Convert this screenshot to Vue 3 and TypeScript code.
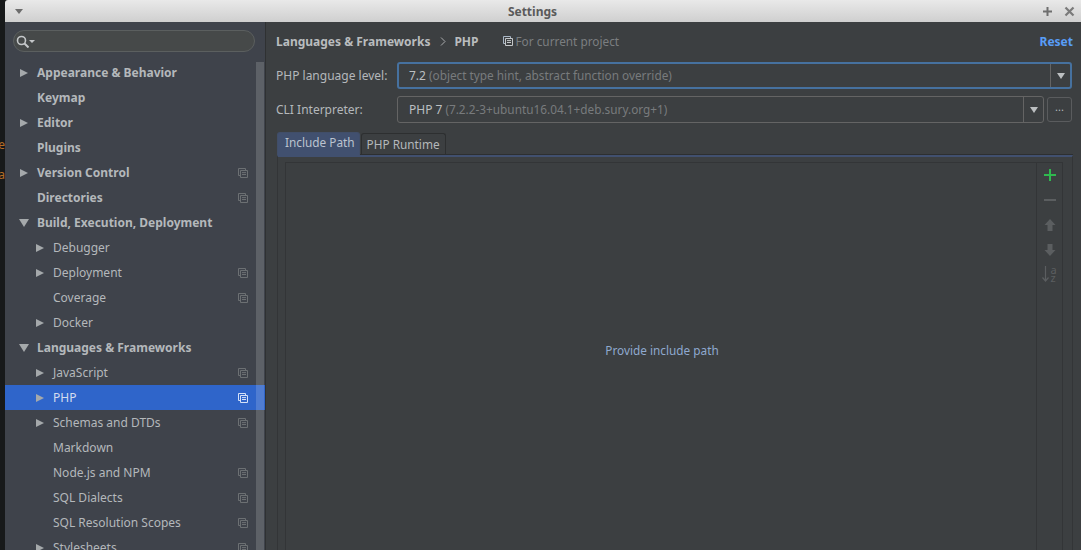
<script setup lang="ts">
interface TreeRow {
  label: string
  level: 0 | 1
  arrow?: 'right' | 'down'
  project?: boolean
  selected?: boolean
}

const rows: TreeRow[] = [
  { label: 'Appearance & Behavior', level: 0, arrow: 'right' },
  { label: 'Keymap', level: 0 },
  { label: 'Editor', level: 0, arrow: 'right' },
  { label: 'Plugins', level: 0 },
  { label: 'Version Control', level: 0, arrow: 'right', project: true },
  { label: 'Directories', level: 0, project: true },
  { label: 'Build, Execution, Deployment', level: 0, arrow: 'down' },
  { label: 'Debugger', level: 1, arrow: 'right' },
  { label: 'Deployment', level: 1, arrow: 'right', project: true },
  { label: 'Coverage', level: 1, project: true },
  { label: 'Docker', level: 1, arrow: 'right' },
  { label: 'Languages & Frameworks', level: 0, arrow: 'down' },
  { label: 'JavaScript', level: 1, arrow: 'right', project: true },
  { label: 'PHP', level: 1, arrow: 'right', project: true, selected: true },
  { label: 'Schemas and DTDs', level: 1, arrow: 'right', project: true },
  { label: 'Markdown', level: 1 },
  { label: 'Node.js and NPM', level: 1, project: true },
  { label: 'SQL Dialects', level: 1, project: true },
  { label: 'SQL Resolution Scopes', level: 1, project: true },
  { label: 'Stylesheets', level: 1, arrow: 'right', project: true },
]
</script>

<template>
  <div class="screen">
    <div class="desktop">
      <span class="peek peek-e">e</span>
      <span class="peek peek-a">a</span>
    </div>
    <div class="window">
      <header class="titlebar">
        <span class="menu-arrow" />
        <span class="title">Settings</span>
        <div class="wm-buttons">
          <svg width="11" height="11" viewBox="0 0 11 11"><path d="M5.500 1v9M1 5.500h9" stroke="#6e6e6e" stroke-width="2" /></svg>
          <svg width="11" height="11" viewBox="0 0 11 11"><path d="M1.500 1.500l8 8M9.500 1.500l-8 8" stroke="#7a7a7a" stroke-width="2.200" /></svg>
        </div>
      </header>

      <div class="body">
        <aside class="sidebar">
          <div class="search">
            <svg width="13" height="13" viewBox="0 0 13 13">
              <circle cx="5.500" cy="5.500" r="4" fill="none" stroke="#c4c7c9" stroke-width="1.600" />
              <path d="M8.500 8.500l4 4" stroke="#c4c7c9" stroke-width="2" />
            </svg>
            <span class="search-arrow" />
          </div>
          <div class="tree">
            <div class="tree-rows">
              <div
                v-for="row in rows"
                :key="row.label"
                class="row"
                :class="{ selected: row.selected, nested: row.level === 1 }"
              >
                <span class="arrow-slot">
                  <span v-if="row.arrow" :class="row.arrow === 'down' ? 'arrow-down' : 'arrow-right'" />
                </span>
                <span class="label" :class="{ strong: row.level === 0 }">{{ row.label }}</span>
                <svg v-if="row.project" class="project-icon" width="10" height="10" viewBox="0 0 10 10">
                  <path d="M2.500 7.500H.5V.5h7v2" fill="none" stroke="currentColor" />
                  <path d="M2.500 2.500h7v7h-7zM4 4.600h4M4 6.500h4" fill="none" stroke="currentColor" />
                </svg>
              </div>
            </div>
            <div class="scrollbar" />
          </div>
        </aside>

        <main class="content">
          <div class="crumbs">
            <strong>Languages &amp; Frameworks</strong>
            <svg width="6" height="9" viewBox="0 0 6 9" class="crumb-sep"><path d="M1 .5l4 4-4 4" fill="none" stroke="#a8abad" /></svg>
            <strong>PHP</strong>
            <span class="for-project">
              <svg width="10" height="10" viewBox="0 0 10 10">
                <path d="M2.500 7.500H.5V.5h7v2" fill="none" stroke="#a9b7c6" />
                <path d="M2.500 2.500h7v7h-7zM4 4.600h4M4 6.500h4" fill="none" stroke="#c4c7c9" />
              </svg>
              For current project
            </span>
            <a class="reset">Reset</a>
          </div>

          <div class="field">
            <label>PHP language level:</label>
            <div class="combo focused">
              <span class="value">7.2 <em>(object type hint, abstract function override)</em></span>
              <span class="combo-btn"><span class="arrow-down small" /></span>
            </div>
          </div>

          <div class="field second">
            <label>CLI Interpreter:</label>
            <div class="combo">
              <span class="value">PHP 7 <em>(7.2.2-3+ubuntu16.04.1+deb.sury.org+1)</em></span>
              <span class="combo-btn"><span class="arrow-down small" /></span>
            </div>
            <button class="more">...</button>
          </div>

          <div class="tabs">
            <div class="tab active">Include Path</div>
            <div class="tab">PHP Runtime</div>
          </div>

          <div class="tab-panel">
            <div class="list-box">
              <div class="list-area">Provide include path</div>
              <div class="toolbar">
                <svg width="14" height="14" viewBox="0 0 14 14"><path d="M7 1v12M1 7h12" stroke="#2fb84f" stroke-width="2" /></svg>
                <svg width="14" height="14" viewBox="0 0 14 14"><path d="M1 7h12" stroke="#5b5e60" stroke-width="2" /></svg>
                <svg width="14" height="14" viewBox="0 0 14 14"><path d="M7 1l5.500 6H9.500v6h-5V7H1.500z" fill="#5b5e60" /></svg>
                <svg width="14" height="14" viewBox="0 0 14 14"><path d="M7 13l5.500-6H9.500V1h-5v6H1.500z" fill="#5b5e60" /></svg>
                <div class="sort-icon">
                  <svg width="7" height="16" viewBox="0 0 7 16"><path d="M3.500 0v15M.5 11.500l3 3.500 3-3.500" fill="none" stroke="#5b5e60" stroke-width="1.200" /></svg>
                  <span class="az">a<br />z</span>
                </div>
              </div>
            </div>
          </div>
        </main>
      </div>
    </div>
  </div>
</template>

<style>
html,
body {
  margin: 0;
  background: #17191a;
  overflow: hidden;
}
</style>

<style scoped>
.screen {
  display: flex;
  width: 1081px;
  height: 550px;
  overflow: hidden;
  font-family: 'Noto Sans', 'Open Sans', sans-serif;
  font-size: 12px;
  color: #b4b8bb;
}

.desktop {
  position: relative;
  width: 5px;
  flex: none;
  background: #17191a;
  overflow: hidden;
}

.peek {
  position: absolute;
  right: 0;
  color: #b56c25;
  font-size: 12px;
  line-height: 14px;
}

.peek-e { top: 138px; }
.peek-a { top: 168px; }

.window {
  flex: 1;
  min-width: 0;
  display: flex;
  flex-direction: column;
}

.titlebar {
  height: 22px;
  flex: none;
  display: flex;
  align-items: center;
  padding: 0 6px 0 10px;
  border-radius: 3px 0 0 0;
  background: linear-gradient(#e9e9e9, #cfcfcf);
}

.menu-arrow {
  width: 0;
  height: 0;
  border-left: 4px solid transparent;
  border-right: 4px solid transparent;
  border-top: 5px solid #6c6c6c;
}

.title {
  margin-left: auto;
  font-weight: 700;
  font-size: 12px;
  color: #5a5a5a;
}

.wm-buttons {
  margin-left: auto;
  display: flex;
  gap: 11px;
  align-items: center;
}

.body {
  flex: 1;
  min-height: 0;
  display: flex;
}

.sidebar {
  width: 260px;
  flex: none;
  display: flex;
  flex-direction: column;
  background: #3f434b;
}

.search {
  display: flex;
  align-items: center;
  height: 20px;
  margin: 8px 10px 0 8px;
  padding-left: 2px;
  border: 1px solid #5b5f5f;
  border-radius: 11px;
  background: #464949;
}

.search-arrow {
  width: 0;
  height: 0;
  border-left: 3px solid transparent;
  border-right: 3px solid transparent;
  border-top: 3px solid #c4c7c9;
}

.tree {
  position: relative;
  flex: 1;
  min-height: 0;
  margin-top: 7px;
  overflow: hidden;
}

.tree-rows {
  padding-top: 1px;
}

.row {
  display: flex;
  align-items: center;
  height: 25px;
  padding-left: 15px;
  padding-right: 17px;
}

.row.nested {
  padding-left: 31px;
}

.row.selected {
  background: #2f65ca;
  color: #d3dcee;
}

.arrow-slot {
  width: 17px;
  flex: none;
  display: flex;
  align-items: center;
}

.arrow-right {
  width: 0;
  height: 0;
  border-top: 4.500px solid transparent;
  border-bottom: 4.500px solid transparent;
  border-left: 8px solid #a5a9ab;
}

.arrow-down {
  display: block;
  width: 0;
  height: 0;
  margin-left: -1px;
  border-left: 5px solid transparent;
  border-right: 5px solid transparent;
  border-top: 8px solid #a5a9ab;
}

.arrow-down.small {
  margin-left: 0;
  border-left-width: 4px;
  border-right-width: 4px;
  border-top-width: 6px;
  border-top-color: #bcbfc1;
}

.label {
  flex: 1;
  white-space: nowrap;
}

.label.strong {
  font-weight: 700;
}

.project-icon {
  flex: none;
  color: #6c7073;
}

.row.selected .project-icon {
  color: #d5e1f7;
}

.scrollbar {
  position: absolute;
  top: 3px;
  bottom: 0;
  right: 1px;
  width: 8px;
  background: rgba(255, 255, 255, 0.16);
}

.content {
  flex: 1;
  min-width: 0;
  display: flex;
  flex-direction: column;
  padding: 10px 9px 0 10px;
  background: #3c3f41;
  border-left: 1px solid #2f3132;
}

.crumbs {
  display: flex;
  align-items: center;
  height: 18px;
  color: #b9bcbe;
}

.crumb-sep {
  margin: 0 8px 0 10px;
}

.for-project {
  display: flex;
  align-items: center;
  gap: 3px;
  margin-left: 24px;
  font-size: 11.800px;
  color: #7b7e80;
}

.reset {
  margin-left: auto;
  margin-right: -1px;
  font-weight: 700;
  color: #589df6;
}

.field {
  display: flex;
  align-items: center;
  height: 27px;
  margin-top: 12px;
}

.field.second {
  margin-top: 7px;
}

.field label {
  width: 121px;
  flex: none;
  white-space: nowrap;
}

.combo {
  flex: 1;
  min-width: 0;
  display: flex;
  height: 27px;
  box-sizing: border-box;
  border: 1px solid #646464;
  border-radius: 3px;
}

.combo.focused {
  border: 2px solid #46719f;
}

.value {
  flex: 1;
  display: flex;
  align-items: baseline;
  gap: 3px;
  padding: 4px 0 0 11px;
  white-space: nowrap;
  color: #bbbfc1;
}

.combo.focused .value {
  padding: 3px 0 0 10px;
}

.value em {
  font-style: normal;
  font-size: 11.800px;
  color: #787b7d;
}

.combo-btn {
  width: 19px;
  flex: none;
  display: flex;
  align-items: center;
  justify-content: center;
  border-left: 1px solid #646464;
}

.more {
  width: 25px;
  height: 25px;
  margin-left: 3px;
  padding: 0 0 6px;
  flex: none;
  border: 1px solid #5a5c5e;
  border-radius: 3px;
  background: transparent;
  color: #b4b8bb;
  font: inherit;
  font-size: 11px;
}

.tabs {
  display: flex;
  align-items: flex-end;
  gap: 1px;
  height: 23px;
  margin-top: 9px;
  margin-left: 1px;
  font-size: 11.800px;
}

.tab {
  height: 22px;
  padding: 0 5px;
  line-height: 20px;
  box-sizing: border-box;
  border: 1px solid #2d2f30;
  border-bottom: 0;
  border-radius: 3px 3px 0 0;
  color: #b4b8bb;
}

.tab.active {
  position: relative;
  z-index: 1;
  height: 23px;
  padding: 0 4px 0 7px;
  line-height: 19px;
  border-color: #414e68;
  background: #41506f;
  color: #bcc3cf;
}

.tab-panel {
  flex: 1;
  min-height: 0;
  box-sizing: border-box;
  margin: 0 -1px 0 1px;
  padding: 5px 9px 0 7px;
  border-top: 2px solid #41506f;
  border-left: 1px solid #333537;
  border-right: 1px solid #333537;
  box-shadow: 0 -1px 0 #2d2f30;
}

.list-box {
  display: flex;
  height: 100%;
  box-sizing: border-box;
  border: 1px solid #333537;
  border-bottom: 0;
}

.list-area {
  flex: 1;
  display: flex;
  align-items: center;
  justify-content: center;
  padding: 0 0 14px 2px;
  font-size: 11.800px;
  color: #8fa9cf;
}

.toolbar {
  width: 25px;
  flex: none;
  display: flex;
  flex-direction: column;
  align-items: center;
  gap: 11px;
  padding-top: 5px;
  border-left: 1px solid #333537;
}

.sort-icon {
  display: flex;
  gap: 1px;
  height: 17px;
  margin-top: -2px;
}

.az {
  font-size: 11px;
  line-height: 8px;
  color: #5b5e60;
}
</style>
